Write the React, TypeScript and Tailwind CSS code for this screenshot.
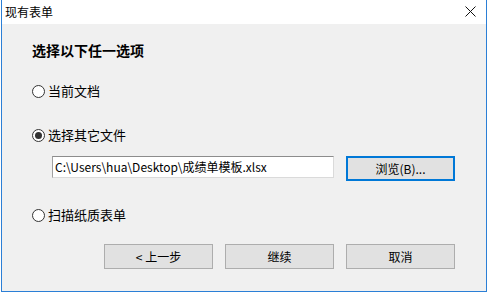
const cjk = "font-['Segoe_UI','Noto_Sans_CJK_SC',sans-serif]";

function Radio({ label, checked }: { label: string; checked?: boolean }) {
  return (
    <label className="flex h-[18px] items-center gap-[3px] text-[13px] text-black">
      <span className="flex h-[13px] w-[13px] items-center justify-center rounded-full border border-[#333] bg-white">
        {checked && <span className="h-[7px] w-[7px] rounded-full bg-[#333]" />}
      </span>
      {label}
    </label>
  );
}

function Btn({ label, focused }: { label: string; focused?: boolean }) {
  return (
    <button
      className={
        focused
          ? 'h-[25px] w-[109px] border-2 border-[#0078d7] bg-[#e1e1e1] text-[12px] text-black'
          : 'h-[25px] w-[109px] border border-[#adadad] bg-[#e1e1e1] text-[12px] text-black'
      }
    >
      {label}
    </button>
  );
}

export default function App() {
  return (
    <div className={`h-[293px] w-[489px] bg-white ${cjk}`}>
      <div className="ml-px flex h-[292px] w-[486px] flex-col border-x border-b border-[#2b7fd6]">
        <div className="flex h-[24px] items-center justify-between bg-white pl-[3px] pr-[10px]">
          <span className="text-[12px] text-black">现有表单</span>
          <svg width="11" height="11" viewBox="0 0 11 11" className="mt-[-2px]">
            <path d="M0.5 0.5 L10.5 10.5 M10.5 0.5 L0.5 10.5" stroke="#111" strokeWidth="1" />
          </svg>
        </div>
        <div className="flex flex-1 flex-col bg-[#f0f0f0] pl-[30px]">
          <h1 className="mt-[17px] h-[18px] text-[14px] font-bold leading-[18px] text-black">选择以下任一选项</h1>
          <div className="mt-[23px]">
            <Radio label="当前文档" />
          </div>
          <div className="mt-[26px]">
            <Radio label="选择其它文件" checked />
          </div>
          <div className="mt-[12px] flex gap-[12px] pl-[20px]">
            <div className="flex h-[22px] w-[282px] items-center border border-[#dadada] border-t-[#8c8c8c] border-l-[#a0a0a0] bg-white pl-[2px] text-[12px] text-black">
              C:\Users\hua\Desktop\成绩单模板.xlsx
            </div>
            <Btn label="浏览(B)..." focused />
          </div>
          <div className="mt-[25px]">
            <Radio label="扫描纸质表单" />
          </div>
          <div className="mt-[20px] flex gap-[12px] pl-[72px]">
            <Btn label="< 上一步" />
            <Btn label="继续" />
            <Btn label="取消" />
          </div>
        </div>
      </div>
    </div>
  );
}
